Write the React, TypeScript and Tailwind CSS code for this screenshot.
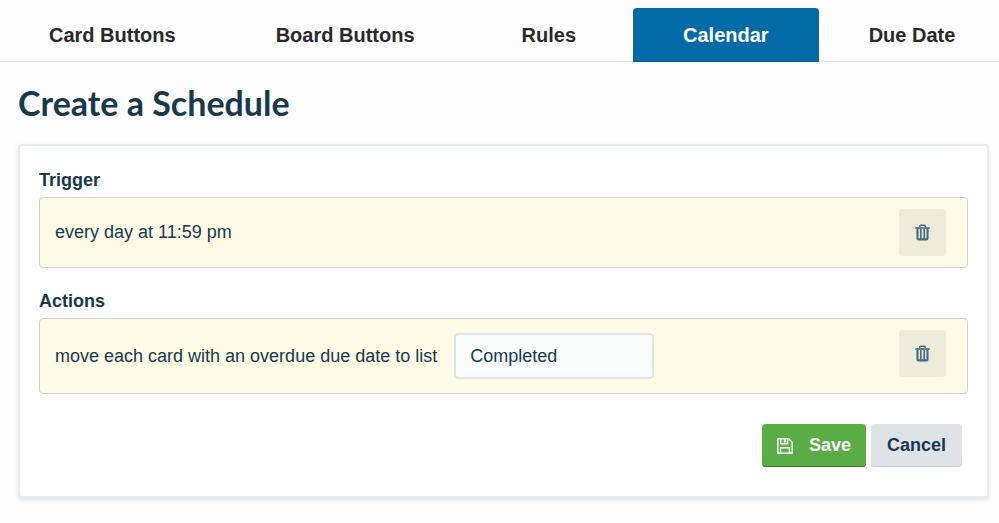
import { useState } from 'react';

const tabs = [
  { label: 'Card Buttons', className: '' },
  { label: 'Board Buttons', className: '' },
  { label: 'Rules', className: 'mx-[7px]' },
  { label: 'Calendar', className: '' },
  { label: 'Due Date', className: '' },
];

function TrashIcon() {
  return (
    <svg width="15" height="17" viewBox="0 0 15 17" fill="none" stroke="currentColor" aria-hidden="true">
      <path d="M4.8 3.2V2Q4.8 1.2 5.6 1.2H9.4Q10.2 1.2 10.2 2V3.2" strokeWidth="1.5" />
      <path d="M.3 4H14.7" strokeWidth="1.7" />
      <path d="M2.5 4.5V14.4Q2.5 15.4 3.5 15.4H11.5Q12.5 15.4 12.5 14.4V4.5" strokeWidth="2.1" />
      <path d="M5.8 5V15M9.2 5V15" strokeWidth="1.7" />
    </svg>
  );
}

function SaveIcon() {
  return (
    <svg width="16" height="16" viewBox="0 0 16 16" fill="none" stroke="currentColor" strokeWidth="1.4" aria-hidden="true">
      <path d="M.8 .8H11.8L15.2 4.2V15.2H.8Z" />
      <path d="M3.8 .7V5.8H10.6V.7" />
      <path d="M6.8 1.5H9V4.5H6.8Z" fill="currentColor" stroke="none" />
      <path d="M3.6 15V9.8H12.4V15" />
    </svg>
  );
}

function DeleteButton({ label }: { label: string }) {
  return (
    <button type="button" aria-label={label} className="flex size-[47px] shrink-0 items-center justify-center rounded bg-[#edebda] text-[#486a80]">
      <TrashIcon />
    </button>
  );
}

export default function App() {
  const [active, setActive] = useState('Calendar');
  const [list, setList] = useState('Completed');

  return (
    <div className="min-h-screen bg-[#fdfdfd] font-['Liberation_Sans',Arial,sans-serif] text-[18px] text-[#17394d]">
      <nav className="-ml-px flex overflow-hidden pt-2 shadow-[inset_0_-1px_0_#dfe0e2]">
        {tabs.map((tab) => (
          <button
            key={tab.label}
            type="button"
            onClick={() => setActive(tab.label)}
            className={`h-[54px] shrink-0 rounded-t px-[50px] text-[20px] font-bold whitespace-nowrap ${tab.className} ${
              active === tab.label ? 'bg-[#026aa7] text-white shadow-[inset_0_-1px_0_#055a8c]' : 'text-[#292929]'
            }`}
          >
            {tab.label}
          </button>
        ))}
      </nav>

      <main className="pt-5 pr-[10px] pb-6 pl-[18px]">
        <h1 className="font-['Lato',sans-serif] text-[34px] leading-[42px] font-bold">Create a Schedule</h1>

        <section className="mt-5 rounded border-2 border-[#e8ebed] bg-[#fefefe] px-[19px] pt-[22px] pb-[29px] shadow-[0_2px_4px_rgba(9,45,66,0.12)]">
          <h2 className="leading-6 font-bold">Trigger</h2>
          <div className="mt-[5px] flex items-start justify-between rounded border border-[#cfd2d2] bg-[#fdfae5] py-[11px] pr-[21px] pl-[15px]">
            <p className="self-center">every day at 11:59 pm</p>
            <DeleteButton label="Remove trigger" />
          </div>

          <h2 className="mt-[21px] leading-6 font-bold">Actions</h2>
          <div className="mt-[5px] flex items-start justify-between rounded border border-[#cfd2d2] bg-[#fdfae5] py-[11px] pr-[21px] pl-[15px]">
            <div className="flex items-center gap-[17px] py-[3px]">
              <label htmlFor="list">move each card with an overdue due date to list</label>
              <input
                id="list"
                type="text"
                value={list}
                onChange={(e) => setList(e.target.value)}
                className="h-[46px] w-[200px] rounded border-2 border-[#dfe3e6] bg-[#fafcfc] px-[14px] outline-none"
              />
            </div>
            <DeleteButton label="Remove action" />
          </div>

          <div className="mt-[30px] flex justify-end gap-[5px] pr-[6px]">
            <button type="button" className="flex h-[43px] items-center gap-4 rounded bg-[#5aac44] px-[15px] font-bold text-white shadow-[inset_0_-1px_0_#3f6f21]">
              <SaveIcon />
              Save
            </button>
            <button type="button" className="h-[43px] rounded bg-[#dfe3e6] px-4 font-bold shadow-[inset_0_-1px_0_#c2ccd1]">
              Cancel
            </button>
          </div>
        </section>
      </main>
    </div>
  );
}
